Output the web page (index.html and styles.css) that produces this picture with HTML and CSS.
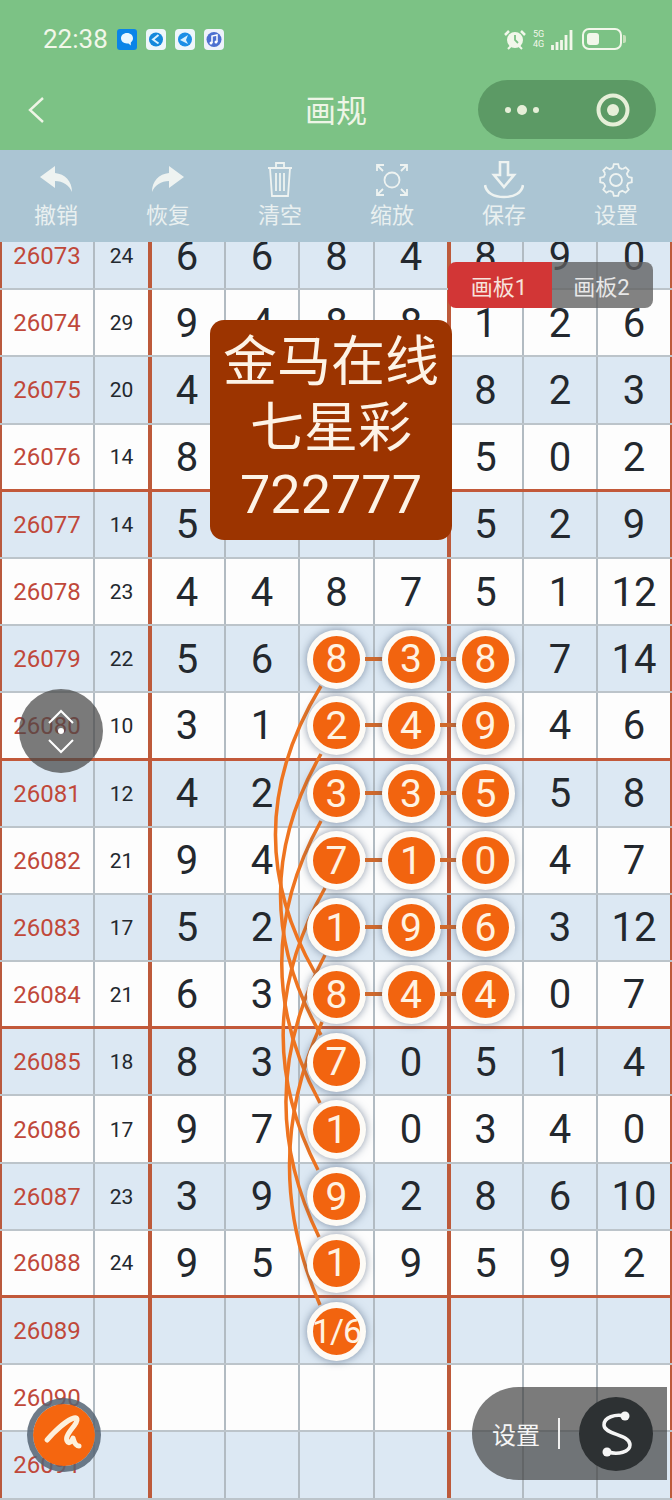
FILE: index.html
```html
<!DOCTYPE html>
<html lang="zh">
<head>
  <meta charset="UTF-8">
  <meta name="viewport" content="width=device-width, initial-scale=1.0">
  <title>画规</title>
  <link rel="stylesheet" href="styles.css">
</head>
<body>
  <header class="top">
    <div class="status">
      <span class="time">22:38</span>
      <div class="apps">
        <svg class="app" viewBox="0 0 20 21"><rect width="20" height="21" rx="3" fill="#0a84e8"/><path d="M10 4c-3.600 0-6 2.300-6 5.300s2.400 5.200 6 5.200c.6 0 1 0 1.500-.1l2.300 2v-3c1.500-.9 2.200-2.400 2.200-4.100 0-3-2.400-5.300-6-5.300z" fill="#e8f6ff"/></svg>
        <svg class="app" viewBox="0 0 20 21"><rect width="20" height="21" rx="4" fill="#eef6fb"/><circle cx="10" cy="10.500" r="7" fill="#1488dc"/><path d="M12.500 6L7 10.500l5.500 4" fill="none" stroke="#d8f0ff" stroke-width="2"/></svg>
        <svg class="app" viewBox="0 0 20 21"><rect width="20" height="21" rx="4" fill="#eef6fb"/><circle cx="10" cy="10.500" r="7" fill="#1c8ee6"/><path d="M5 11l8-5-2 5 2 4z" fill="#d8f0ff"/></svg>
        <svg class="app" viewBox="0 0 20 21"><rect width="20" height="21" rx="4" fill="#eef2fb"/><circle cx="10" cy="10.500" r="7.500" fill="#4c6fd0"/><path d="M8 14V7l5-1v7" fill="none" stroke="#fff" stroke-width="1.500"/><circle cx="7" cy="14" r="1.500" fill="#fff"/><circle cx="12" cy="13" r="1.500" fill="#fff"/></svg>
      </div>
      <div class="sys">
        <svg class="alarm" viewBox="0 0 22 21"><path d="M1 6l4-4M21 6l-4-4" stroke="#f2f7ea" stroke-width="2.500" fill="none"/><circle cx="11" cy="11" r="8" fill="#f2f7ea"/><path d="M11 6v5l3 3" stroke="#7cc285" stroke-width="1.800" fill="none"/><path d="M4 20l3-3M18 20l-3-3" stroke="#f2f7ea" stroke-width="2"/></svg>
        <span class="net">5G<br>4G</span>
        <svg class="signal" viewBox="0 0 22 21"><path d="M1.500 21v-5M6 21v-8M10.500 21v-10M15 21V6M20 21V1" stroke="#f2f7ea" stroke-width="2.800" fill="none"/></svg>
        <div class="batt"><i></i></div>
        <span class="nub"></span>
      </div>
    </div>
    <nav class="nav">
      <svg class="back" viewBox="0 0 16 26"><path d="M15 1L2 13l13 12" fill="none" stroke="#eef5e6" stroke-width="2.400"/></svg>
      <h1 class="title">画规</h1>
      <div class="capsule">
        <svg class="dots" viewBox="0 0 36 12"><circle cx="4" cy="6" r="3" fill="#e6efd8"/><circle cx="18" cy="6" r="5" fill="#e6efd8"/><circle cx="32" cy="6" r="3" fill="#e6efd8"/></svg>
        <svg class="target" viewBox="0 0 34 34"><circle cx="17" cy="17" r="14.500" fill="none" stroke="#e6efd8" stroke-width="4"/><circle cx="17" cy="17" r="6" fill="#e6efd8"/></svg>
      </div>
    </nav>
    <div class="tools">
      <div class="tool">
        <svg class="ico" viewBox="0 0 40 38"><path d="M19 5L4 16l15 11v-7c8 0 14 4 17 11 0-11-7-18-17-19z" fill="#eef3f1"/></svg>
        <span>撤销</span>
      </div>
      <div class="tool">
        <svg class="ico" viewBox="0 0 40 38"><path d="M21 5l15 11-15 11v-7c-8 0-14 4-17 11 0-11 7-18 17-19z" fill="#eef3f1"/></svg>
        <span>恢复</span>
      </div>
      <div class="tool">
        <svg class="ico line" viewBox="0 0 40 38"><path d="M8 7h24M16 6V2h8v4M10 7l2 28h16l2-28M16 12v18M20 12v18M24 12v18"/></svg>
        <span>清空</span>
      </div>
      <div class="tool">
        <svg class="ico line" viewBox="0 0 40 38"><circle cx="20" cy="19" r="7.500"/><path d="M5 10V4h7M35 10V4h-7M5 28v6h7M35 28v6h-7M5 4l6 6M35 4l-6 6M5 34l6-6M35 34l-6-6"/></svg>
        <span>缩放</span>
      </div>
      <div class="tool">
        <svg class="ico line thick" viewBox="0 0 40 38"><path d="M16 1h8v13h6L20 26 10 14h6zM1 24c1 8 9 12 19 12s18-4 19-12"/></svg>
        <span>保存</span>
      </div>
      <div class="tool">
        <svg class="ico line" viewBox="-3 -2 40 38">
          <path id="tooth" d="M13.800 4.900L14.800 1.200H19.200L20.200 4.900L23.250 6.170"/>
          <use href="#tooth" transform="rotate(45 17 17)"/>
          <use href="#tooth" transform="rotate(90 17 17)"/>
          <use href="#tooth" transform="rotate(135 17 17)"/>
          <use href="#tooth" transform="rotate(180 17 17)"/>
          <use href="#tooth" transform="rotate(225 17 17)"/>
          <use href="#tooth" transform="rotate(270 17 17)"/>
          <use href="#tooth" transform="rotate(315 17 17)"/>
          <circle cx="17" cy="17" r="6"/>
        </svg>
        <span>设置</span>
      </div>
    </div>
  </header>

  <main class="board">
    <div class="sheet">
      <div class="row alt"><b>26073</b><em>24</em><i>6</i><i>6</i><i>8</i><i>4</i><i>8</i><i>9</i><i>0</i></div>
      <div class="row"><b>26074</b><em>29</em><i>9</i><i>4</i><i>8</i><i>8</i><i>1</i><i>2</i><i>6</i></div>
      <div class="row alt"><b>26075</b><em>20</em><i>4</i><i></i><i></i><i></i><i>8</i><i>2</i><i>3</i></div>
      <div class="row sec"><b>26076</b><em>14</em><i>8</i><i></i><i></i><i></i><i>5</i><i>0</i><i>2</i></div>
      <div class="row alt"><b>26077</b><em>14</em><i>5</i><i></i><i></i><i></i><i>5</i><i>2</i><i>9</i></div>
      <div class="row"><b>26078</b><em>23</em><i>4</i><i>4</i><i>8</i><i>7</i><i>5</i><i>1</i><i>12</i></div>
      <div class="row alt"><b>26079</b><em>22</em><i>5</i><i>6</i><i><span class="ball link">8</span></i><i><span class="ball link">3</span></i><i><span class="ball">8</span></i><i>7</i><i>14</i></div>
      <div class="row sec"><b>26080</b><em>10</em><i>3</i><i>1</i><i><span class="ball link">2</span></i><i><span class="ball link">4</span></i><i><span class="ball">9</span></i><i>4</i><i>6</i></div>
      <div class="row alt"><b>26081</b><em>12</em><i>4</i><i>2</i><i><span class="ball link">3</span></i><i><span class="ball link">3</span></i><i><span class="ball">5</span></i><i>5</i><i>8</i></div>
      <div class="row"><b>26082</b><em>21</em><i>9</i><i>4</i><i><span class="ball link">7</span></i><i><span class="ball link">1</span></i><i><span class="ball">0</span></i><i>4</i><i>7</i></div>
      <div class="row alt"><b>26083</b><em>17</em><i>5</i><i>2</i><i><span class="ball link">1</span></i><i><span class="ball link">9</span></i><i><span class="ball">6</span></i><i>3</i><i>12</i></div>
      <div class="row sec"><b>26084</b><em>21</em><i>6</i><i>3</i><i><span class="ball link">8</span></i><i><span class="ball link">4</span></i><i><span class="ball">4</span></i><i>0</i><i>7</i></div>
      <div class="row alt"><b>26085</b><em>18</em><i>8</i><i>3</i><i><span class="ball">7</span></i><i>0</i><i>5</i><i>1</i><i>4</i></div>
      <div class="row"><b>26086</b><em>17</em><i>9</i><i>7</i><i><span class="ball">1</span></i><i>0</i><i>3</i><i>4</i><i>0</i></div>
      <div class="row alt"><b>26087</b><em>23</em><i>3</i><i>9</i><i><span class="ball">9</span></i><i>2</i><i>8</i><i>6</i><i>10</i></div>
      <div class="row sec"><b>26088</b><em>24</em><i>9</i><i>5</i><i><span class="ball">1</span></i><i>9</i><i>5</i><i>9</i><i>2</i></div>
      <div class="row alt"><b>26089</b><em></em><i></i><i></i><i><span class="ball frac">1/6</span></i><i></i><i></i><i></i><i></i></div>
      <div class="row"><b>26090</b><em></em><i></i><i></i><i></i><i></i><i></i><i></i><i></i></div>
      <div class="row alt"><b>26091</b><em></em><i></i><i></i><i></i><i></i><i></i><i></i><i></i></div>
    </div>

    <svg class="curves" viewBox="0 242 672 1258">
      <path d="M321 686Q233 830 315 973"/>
      <path d="M321 754Q240 895 321 1035"/>
      <path d="M321 821Q243 962 320 1103"/>
      <path d="M325 888Q245 1029 318 1170"/>
      <path d="M325 955Q250 1096 319 1237"/>
      <path d="M322 1022Q258 1163 320 1305"/>
    </svg>
  </main>

  <div class="tabs">
    <span class="tab on">画板1</span>
    <span class="tab">画板2</span>
  </div>

  <div class="notice">金马在线<br>七星彩<br>722777</div>

  <div class="scroller">
    <svg viewBox="0 0 84 84"><path d="M30 34l12-12 12 12M30 51l12 12 12-12" fill="none" stroke="#fff" stroke-width="2"/><circle cx="42" cy="42" r="3" fill="#fff"/></svg>
  </div>

  <div class="pen">
    <svg viewBox="0 0 62 62"><path d="M14 36C22 27 34 16 41 14c5-1 3 4 0 8-4 5-9 11-7 15 2 4 5 0 6-3 1 3 2 8 6 8" fill="none" stroke="#fdf0dc" stroke-width="5" stroke-linecap="round" stroke-linejoin="round"/></svg>
  </div>

  <div class="setbar">
    <span class="setlabel">设置</span>
    <span class="divider"></span>
    <div class="sbtn">
      <svg viewBox="0 0 74 74"><path d="M46 19C36 17 25 20 25 28c0 10 26 9 26 20 0 7-12 10-22 7" fill="none" stroke="#f5f5f5" stroke-width="3.500" stroke-linecap="round"/><circle cx="46" cy="19" r="4.500" fill="#f5f5f5"/><circle cx="28" cy="55" r="4.500" fill="#f5f5f5"/></svg>
    </div>
  </div>
</body>
</html>
```

FILE: styles.css
```css
* {
  box-sizing: border-box;
}

body {
  position: relative;
  width: 672px;
  height: 1500px;
  margin: 0;
  overflow: hidden;
  background: #fdfdfd;
  font-family: Roboto, "Noto Sans CJK SC", sans-serif;
}

/* status bar + title bar */
.top {
  position: relative;
  z-index: 2;
}

.status {
  display: flex;
  align-items: center;
  height: 78px;
  padding: 0 46px 0 43px;
  background: #7cc285;
  color: #f2f7ea;
}

.time {
  width: 74px;
  font-size: 26px;
}

.apps {
  display: flex;
  gap: 9px;
}

.app {
  width: 20px;
  height: 21px;
}

.sys {
  display: flex;
  align-items: center;
  margin-left: auto;
}

.alarm {
  width: 22px;
  height: 21px;
}

.net {
  width: 16px;
  margin-left: 7px;
  font-size: 9px;
  line-height: 10px;
}

.signal {
  width: 22px;
  height: 21px;
  margin-left: 2px;
}

.batt {
  display: flex;
  width: 40px;
  height: 22px;
  margin-left: 9px;
  padding: 3px;
  border: 2px solid #f2f7ea;
  border-radius: 7px;
}

.batt i {
  width: 12px;
  border-radius: 3px;
  background: #f2f7ea;
}

.nub {
  width: 3px;
  height: 8px;
  margin-left: 1px;
  border-radius: 0 2px 2px 0;
  background: #c6e0bb;
}

.nav {
  position: relative;
  display: flex;
  align-items: center;
  justify-content: center;
  height: 72px;
  background: #7cc285;
}

.back {
  position: absolute;
  left: 28px;
  top: 19px;
  width: 16px;
  height: 26px;
}

.title {
  margin: 0 0 12px;
  color: #eef5e6;
  font-size: 31px;
  font-weight: 400;
}

.capsule {
  position: absolute;
  left: 478px;
  top: 2px;
  display: flex;
  align-items: center;
  width: 178px;
  height: 59px;
  padding-left: 26px;
  border-radius: 30px;
  background: #5c9a65;
}

.dots {
  width: 36px;
  height: 12px;
}

.target {
  width: 34px;
  height: 34px;
  margin-left: 56px;
}

/* toolbar */
.tools {
  display: grid;
  grid-template-columns: repeat(6, 112px);
  height: 92px;
  background: #abc5d3;
}

.tool {
  display: flex;
  flex-direction: column;
  align-items: center;
  padding-top: 11px;
  color: #e9f0f0;
  font-size: 22px;
  line-height: 30px;
}

.ico {
  width: 40px;
  height: 38px;
  margin-bottom: 2px;
}

.line {
  fill: none;
  stroke: #eef3f1;
  stroke-width: 1.800;
}

.thick {
  stroke-width: 2.600;
}

/* number sheet */
.board {
  position: relative;
  height: 1258px;
  overflow: hidden;
}

.sheet {
  margin-top: -19px;
}

.row {
  display: grid;
  grid-template-columns: 95px 57px 74px 74px 75px 76px 73px 74px 74px;
  height: 67.200px;
  border-bottom: 2px solid #bcc4ca;
  background: #fdfdfd;
}

.row.alt {
  background: #dce8f3;
}

.row.sec {
  border-bottom: 3px solid #c2593a;
}

.row > * {
  display: flex;
  align-items: center;
  justify-content: center;
  padding-top: 1px;
  border-right: 2px solid #b2bbc2;
  font-style: normal;
  font-weight: 400;
}

.row > b {
  padding-right: 1px;
  border-left: 2px solid #b9593d;
  color: #c0483a;
  font-size: 24px;
}

.row > em {
  border-right: 4px solid #bd5a3a;
  color: #23282e;
  font-size: 21px;
}

.row > i {
  color: #23282e;
  font-size: 40px;
}

.row > i:nth-child(3) {
  padding-right: 2px;
}

.row > i:nth-child(6) {
  border-right: 4px solid #bd5a3a;
}

.row > i:nth-child(7) {
  padding-right: 2px;
}

.row > i:nth-child(9) {
  border-right: 2px solid #bd5a3a;
}

.ball {
  position: relative;
  z-index: 1;
  flex: none;
  display: flex;
  align-items: center;
  justify-content: center;
  width: 59px;
  height: 59px;
  border: 6px solid #fdfbf6;
  border-radius: 50%;
  background: #f2640f;
  box-shadow: 0 0 9px rgba(60, 80, 110, 0.6);
  color: #fff3e2;
  font-size: 39px;
}

.ball.link::after {
  content: "";
  position: absolute;
  left: 52px;
  top: 21px;
  z-index: -1;
  width: 18px;
  height: 4px;
  background: #d0692c;
}

.ball.frac {
  font-size: 34px;
  letter-spacing: -1px;
  white-space: nowrap;
}

.curves {
  position: absolute;
  left: 0;
  top: 0;
  width: 672px;
  height: 1258px;
  fill: none;
  stroke: #ee7420;
  stroke-width: 3.500;
}

/* floating things */
.tabs {
  position: absolute;
  left: 448px;
  top: 262px;
  z-index: 3;
  display: flex;
  height: 46px;
}

.tab {
  display: flex;
  align-items: center;
  justify-content: center;
  width: 101px;
  padding-right: 2px;
  border-radius: 0 8px 8px 0;
  background: rgba(95, 95, 95, 0.78);
  color: #e8e8e8;
  font-size: 22px;
}

.tab.on {
  width: 104px;
  border-radius: 8px 0 0 8px;
  background: #d23636;
  color: #f7e3dc;
}

.notice {
  position: absolute;
  left: 210px;
  top: 320px;
  z-index: 3;
  width: 242px;
  height: 220px;
  padding-top: 10px;
  border-radius: 14px;
  background: #9c3400;
  color: #fdf3e6;
  font-size: 54px;
  line-height: 66px;
  text-align: center;
}

.scroller {
  position: absolute;
  left: 19px;
  top: 689px;
  z-index: 3;
  width: 84px;
  height: 84px;
  border-radius: 50%;
  background: rgba(70, 70, 70, 0.72);
}

.scroller svg {
  display: block;
}

.pen {
  position: absolute;
  left: 27px;
  top: 1398px;
  z-index: 3;
  width: 74px;
  height: 74px;
  border: 6px solid rgba(85, 100, 115, 0.85);
  border-radius: 50%;
  background: #f5660f;
  background-clip: padding-box;
}

.pen svg {
  display: block;
}

.setbar {
  position: absolute;
  left: 472px;
  top: 1387px;
  z-index: 3;
  display: flex;
  align-items: center;
  width: 195px;
  height: 93px;
  padding-left: 20px;
  border-radius: 47px 0 0 47px;
  background: rgba(60, 60, 60, 0.68);
}

.setlabel {
  color: #f5f5f5;
  font-size: 24px;
}

.divider {
  width: 2px;
  height: 31px;
  margin-left: 18px;
  background: #f0f0f0;
}

.sbtn {
  width: 74px;
  height: 74px;
  margin-left: 19px;
  border-radius: 50%;
  background: #2d3133;
}

.sbtn svg {
  display: block;
}
```
